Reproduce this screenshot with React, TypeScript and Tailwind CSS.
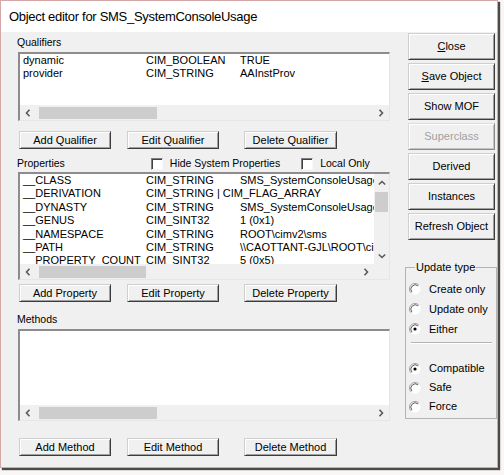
import React from 'react';

const btn =
  "flex items-center justify-center bg-[#f0f0f0] border border-t-[#cfcfcf] border-l-[#cfcfcf] border-r-[#3c3c3c] border-b-[#3c3c3c] shadow-[inset_1px_1px_0_#ffffff,inset_-1px_-1px_0_#a0a0a0] text-[11px] leading-none text-black whitespace-nowrap";

function Chevron({ dir }: { dir: 'left' | 'right' | 'up' | 'down' }) {
  const pts = {
    left: '4.5,0.8 1.5,4 4.5,7.2',
    right: '1.5,0.8 4.5,4 1.5,7.2',
    up: '0.8,4.5 4,1.5 7.2,4.5',
    down: '0.8,1.5 4,4.5 7.2,1.5',
  }[dir];
  const horiz = dir === 'left' || dir === 'right';
  return (
    <svg width={horiz ? 6 : 8} height={horiz ? 8 : 6} viewBox={horiz ? '0 0 6 8' : '0 0 8 6'}>
      <polyline points={pts} fill="none" stroke="#5a5a5a" strokeWidth="1.6" />
    </svg>
  );
}

function HScroll({ thumb }: { thumb: string }) {
  return (
    <div className="h-[15px] flex bg-[#f0f0f0] flex-1">
      <div className="w-[16px] flex items-center justify-center"><Chevron dir="left" /></div>
      <div className="flex-1 flex items-center">
        <div className={`ml-[3px] h-[12px] bg-[#cdcdcd] ${thumb}`}></div>
      </div>
      <div className="w-[17px] flex items-center justify-center"><Chevron dir="right" /></div>
    </div>
  );
}

function Radio({ checked, label }: { checked?: boolean; label: string }) {
  return (
    <div className="flex items-center">
      <svg width="12" height="12" viewBox="0 0 12 12">
        <circle cx="6" cy="6" r="5.5" fill="#ffffff" />
        <path d="M2.1 9.9 A5.5 5.5 0 0 1 9.9 2.1" fill="none" stroke="#a0a0a0" strokeWidth="1" />
        <path d="M2.9 9.1 A4.4 4.4 0 0 1 9.1 2.9" fill="none" stroke="#606060" strokeWidth="1" />
        {checked && <circle cx="6" cy="6" r="1.6" fill="#000000" />}
      </svg>
      <span className="ml-[8px] text-[11px]">{label}</span>
    </div>
  );
}

function Check({ label }: { label: string }) {
  return (
    <div className="flex items-center">
      <div className="w-[12px] h-[12px] bg-white border border-t-[#808080] border-l-[#808080] border-r-[#f8f8f8] border-b-[#f8f8f8] shadow-[inset_1px_1px_0_#404040]"></div>
      <span className="ml-[7px] text-[10.5px]">{label}</span>
    </div>
  );
}

const qualifiers = [
  ['dynamic', 'CIM_BOOLEAN', 'TRUE'],
  ['provider', 'CIM_STRING', 'AAInstProv'],
];

const properties = [
  ['__CLASS', 'CIM_STRING', 'SMS_SystemConsoleUsage'],
  ['__DERIVATION', 'CIM_STRING | CIM_FLAG_ARRAY', ''],
  ['__DYNASTY', 'CIM_STRING', 'SMS_SystemConsoleUsage'],
  ['__GENUS', 'CIM_SINT32', '1 (0x1)'],
  ['__NAMESPACE', 'CIM_STRING', String.raw`ROOT\cimv2\sms`],
  ['__PATH', 'CIM_STRING', String.raw`\\CAOTTANT-GJL\ROOT\cimv2\sms:SMS_SystemConsoleUsage`],
  ['__PROPERTY_COUNT', 'CIM_SINT32', '5 (0x5)'],
];

function Rows({ rows, leading }: { rows: string[][]; leading: string }) {
  return (
    <div className={`pl-[3px] text-[11px] ${leading}`}>
      {rows.map((r) => (
        <div key={r[0]} className="grid grid-cols-[123px_94px_1fr] whitespace-nowrap">
          <span>{r[0]}</span>
          <span>{r[1]}</span>
          <span>{r[2]}</span>
        </div>
      ))}
    </div>
  );
}

const listBox =
  "ml-[1px] w-[372px] bg-white border-t-2 border-l-2 border-r border-b border-t-[#8c8c8c] border-l-[#8c8c8c] border-r-[#e6e6e6] border-b-[#e6e6e6] flex flex-col overflow-hidden";

export default function App() {
  return (
    <div className="w-[504px] h-[475px] bg-[#fbf6f6] font-['Liberation_Sans',Arial,sans-serif] text-black">
      <div className="w-[498px] h-[468px] border border-[#d6a7a7] shadow-[2px_2px_1px_#4a4a4a] bg-[#f0f0f0] flex flex-col">
        <div className="h-[31px] bg-white pl-[8px] flex items-center text-[13px] tracking-[-0.3px]">
          Object editor for SMS_SystemConsoleUsage
        </div>

        <div className="flex-1 flex">
          {/* left column */}
          <div className="ml-[16px] w-[374px] flex flex-col">
            <div className="mt-[4px] h-[13px] text-[10.5px] leading-[13px]">Qualifiers</div>
            <div className={`mt-[3px] h-[69px] ${listBox}`}>
              <div className="flex-1 overflow-hidden">
                <Rows rows={qualifiers} leading="leading-[13px]" />
              </div>
              <div className="flex">
                <HScroll thumb="w-[118px]" />
              </div>
            </div>
            <div className="mt-[10px] h-[18px] flex">
              <div className={`ml-[2px] w-[92px] ${btn}`}>Add Qualifier</div>
              <div className={`ml-[16px] w-[92px] ${btn}`}>Edit Qualifier</div>
              <div className={`ml-[25px] w-[93px] ${btn}`}>Delete Qualifier</div>
            </div>

            <div className="mt-[8px] h-[14px] flex items-center text-[10.5px]">
              <span>Properties</span>
              <div className="ml-[86px]"><Check label="Hide System Properties" /></div>
              <div className="ml-[21px]"><Check label="Local Only" /></div>
            </div>
            <div className={`mt-[1px] h-[108px] ${listBox}`}>
              <div className="flex-1 flex overflow-hidden">
                <div className="flex-1 overflow-hidden">
                  <Rows rows={properties} leading="leading-[13.4px]" />
                </div>
                <div className="w-[15px] bg-[#f0f0f0] flex flex-col">
                  <div className="h-[17px] flex items-center justify-center"><Chevron dir="up" /></div>
                  <div className="flex-1">
                    <div className="mt-[1px] mx-[1px] h-[20px] bg-[#cdcdcd]"></div>
                  </div>
                  <div className="h-[17px] flex items-center justify-center"><Chevron dir="down" /></div>
                </div>
              </div>
              <div className="flex">
                <HScroll thumb="w-[107px]" />
                <div className="w-[15px] h-[15px] bg-[#f0f0f0]"></div>
              </div>
            </div>
            <div className="mt-[4px] h-[18px] flex">
              <div className={`ml-[2px] w-[92px] ${btn}`}>Add Property</div>
              <div className={`ml-[16px] w-[92px] ${btn}`}>Edit Property</div>
              <div className={`ml-[25px] w-[93px] ${btn}`}>Delete Property</div>
            </div>

            <div className="mt-[11px] h-[13px] text-[10.5px] leading-[13px]">Methods</div>
            <div className={`mt-[3px] h-[92px] ${listBox}`}>
              <div className="flex-1"></div>
              <div className="flex">
                <HScroll thumb="w-[118px]" />
              </div>
            </div>
            <div className="mt-[17px] h-[18px] flex">
              <div className={`ml-[2px] w-[92px] ${btn}`}>Add Method</div>
              <div className={`ml-[16px] w-[92px] ${btn}`}>Edit Method</div>
              <div className={`ml-[25px] w-[93px] ${btn}`}>Delete Method</div>
            </div>
          </div>

          {/* right column */}
          <div className="ml-[14px] w-[92px] flex flex-col">
            <div className="ml-[3px] w-[87px] mt-[1px] flex flex-col gap-[3px]">
              <div className={`h-[27px] ${btn}`}><span><u>C</u>lose</span></div>
              <div className={`h-[27px] ${btn}`}><span><u>S</u>ave Object</span></div>
              <div className={`h-[27px] ${btn}`}>Show MOF</div>
              <div className="h-[27px] flex items-center justify-center bg-[#f0f0f0] border border-t-[#dcdcdc] border-l-[#dcdcdc] border-r-[#8a8a8a] border-b-[#8a8a8a] shadow-[inset_1px_1px_0_#ffffff,inset_-1px_-1px_0_#c4c4c4] text-[11px] leading-none text-[#a0a0a0]">Superclass</div>
              <div className={`h-[27px] ${btn}`}>Derived</div>
              <div className={`h-[27px] ${btn}`}>Instances</div>
              <div className={`h-[27px] ${btn}`}>Refresh Object</div>
            </div>

            <fieldset className="mt-[21px] w-[92px] h-[158px] border border-[#b4b4b4] pl-[3px] pr-[2px]">
              <legend className="ml-[6px] px-[1px] text-[11px] leading-[13px]">Update type</legend>
              <div className="mt-[5px] flex flex-col">
                <div className="h-[20px] flex items-center"><Radio label="Create only" /></div>
                <div className="h-[20px] flex items-center"><Radio label="Update only" /></div>
                <div className="h-[20px] flex items-center"><Radio checked label="Either" /></div>
                <div className="mt-[3px] mx-[2px] h-[2px] border-t border-b border-t-[#b4b4b4] border-b-white"></div>
                <div className="mt-[15px] h-[19px] flex items-center"><Radio checked label="Compatible" /></div>
                <div className="h-[19px] flex items-center"><Radio label="Safe" /></div>
                <div className="h-[19px] flex items-center"><Radio label="Force" /></div>
              </div>
            </fieldset>
          </div>
        </div>
      </div>
    </div>
  );
}
